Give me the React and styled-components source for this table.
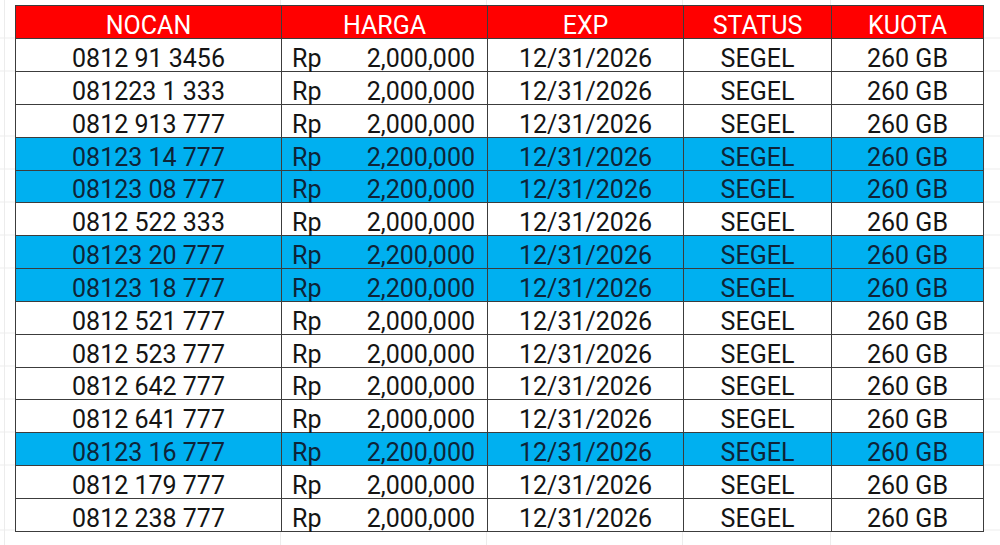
import React from "react";
import styled, { createGlobalStyle } from "styled-components";

const rows = [
    { nocan: "0812 91 3456", harga: "2,000,000", hot: false },
    { nocan: "081223 1 333", harga: "2,000,000", hot: false },
    { nocan: "0812 913 777", harga: "2,000,000", hot: false },
    { nocan: "08123 14 777", harga: "2,200,000", hot: true },
    { nocan: "08123 08 777", harga: "2,200,000", hot: true },
    { nocan: "0812 522 333", harga: "2,000,000", hot: false },
    { nocan: "08123 20 777", harga: "2,200,000", hot: true },
    { nocan: "08123 18 777", harga: "2,200,000", hot: true },
    { nocan: "0812 521 777", harga: "2,000,000", hot: false },
    { nocan: "0812 523 777", harga: "2,000,000", hot: false },
    { nocan: "0812 642 777", harga: "2,000,000", hot: false },
    { nocan: "0812 641 777", harga: "2,000,000", hot: false },
    { nocan: "08123 16 777", harga: "2,200,000", hot: true },
    { nocan: "0812 179 777", harga: "2,000,000", hot: false },
    { nocan: "0812 238 777", harga: "2,000,000", hot: false },
];

const GlobalStyle = createGlobalStyle`
    html, body {
        margin: 0;
        padding: 0;
        background: #fff;
    }
    body {
        font-family: Roboto, "Noto Sans", sans-serif;
        width: 1000px;
        height: 545px;
        overflow: hidden;
    }
`;

const Sheet = styled.div`
    width: 1000px;
    height: 545px;
    box-sizing: border-box;
    padding: 5px 0 0 15px;
    background-color: #fff;
    background-image:
        linear-gradient(90deg,
            transparent 4px, #ececec 4px, #ececec 5px, transparent 5px,
            transparent 280px, #ececec 280px, #ececec 281px, transparent 281px,
            transparent 486px, #ececec 486px, #ececec 487px, transparent 487px,
            transparent 682px, #ececec 682px, #ececec 683px, transparent 683px,
            transparent 830px, #ececec 830px, #ececec 831px, transparent 831px),
        repeating-linear-gradient(180deg,
            transparent 0, transparent 32px, #ececec 32px, #ececec 32.83px);
    background-position: 0 0, 0 5.5px;
`;

const Table = styled.table`
    border-collapse: collapse;
    table-layout: fixed;
    width: 968px;
    background: #fff;
    border: 1px solid #3c3c3c;
`;

const Head = styled.th`
    background: #ff0000;
    color: #fff;
    font-weight: 400;
    font-size: 25px;
    line-height: 24px;
    height: 33.3px;
    padding: 0 0 0 0;
    vertical-align: bottom;
    text-align: center;
    border: 1px solid #3c3c3c;
    box-sizing: border-box;
`;

const Row = styled.tr`
    background: ${(p) => (p.$hot ? "#00b0f0" : "#fff")};
    color: ${(p) => (p.$hot ? "#0e2438" : "#141414")};
`;

const Cell = styled.td`
    font-size: 25px;
    line-height: 24px;
    height: 32.83px;
    padding: 0 ${(p) => (p.$pad ? "12px" : "0")} 0 ${(p) => (p.$pad ? "10px" : "0")};
    vertical-align: bottom;
    text-align: center;
    border: 1px solid #3c3c3c;
    box-sizing: border-box;
    white-space: nowrap;
`;

const Money = styled.div`
    display: flex;
    justify-content: space-between;
    align-items: flex-end;
`;

const App = () => {
    return (
        <Sheet>
            <GlobalStyle />
            <Table>
                <colgroup>
                    <col style={{ width: 266 }} />
                    <col style={{ width: 206 }} />
                    <col style={{ width: 196 }} />
                    <col style={{ width: 148 }} />
                    <col style={{ width: 152 }} />
                </colgroup>
                <thead>
                    <tr>
                        <Head>NOCAN</Head>
                        <Head>HARGA</Head>
                        <Head>EXP</Head>
                        <Head>STATUS</Head>
                        <Head>KUOTA</Head>
                    </tr>
                </thead>
                <tbody>
                    {rows.map((r, i) => (
                        <Row key={i} $hot={r.hot}>
                            <Cell>{r.nocan}</Cell>
                            <Cell $pad>
                                <Money>
                                    <span>Rp</span>
                                    <span>{r.harga}</span>
                                </Money>
                            </Cell>
                            <Cell>12/31/2026</Cell>
                            <Cell>SEGEL</Cell>
                            <Cell>260 GB</Cell>
                        </Row>
                    ))}
                </tbody>
            </Table>
        </Sheet>
    );
};

export default App;
